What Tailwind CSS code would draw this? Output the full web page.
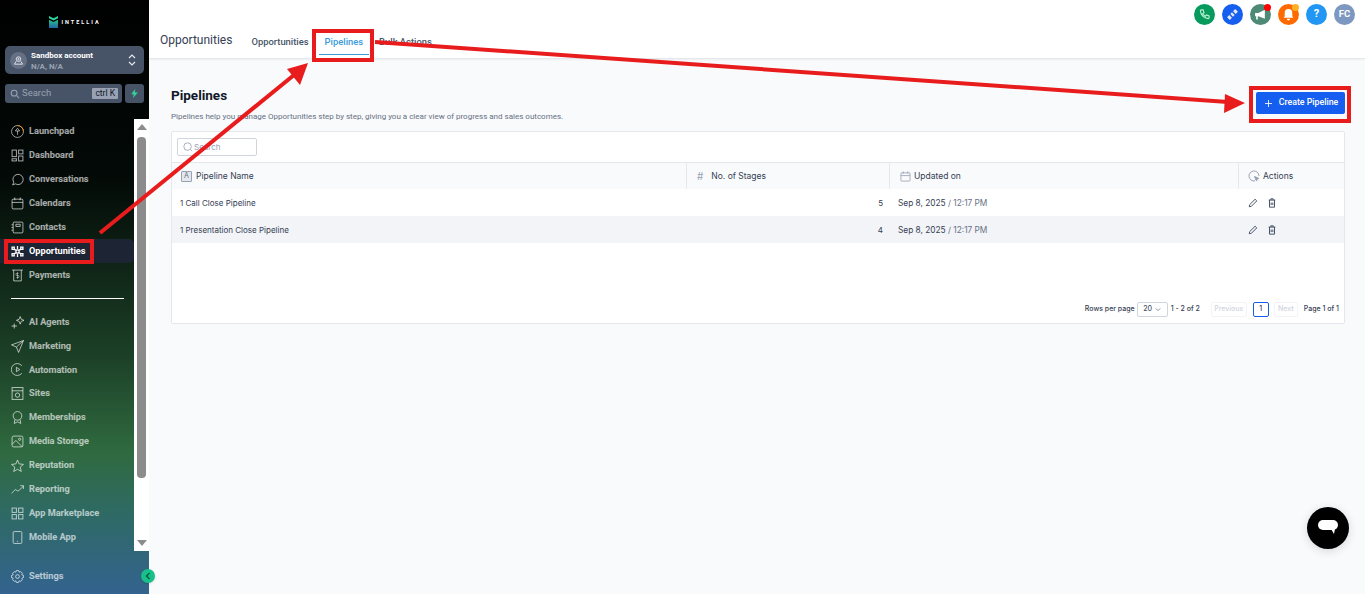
<!DOCTYPE html>
<html lang="en">
<head>
	<meta charset="UTF-8">
	<title>Pipelines</title>
	<script src="https://cdn.jsdelivr.net/npm/@tailwindcss/browser@4"></script>
</head>
<body class="relative h-[594px] w-[1365px] overflow-hidden bg-[#f9fafb] font-['Roboto',sans-serif]">
<div class="flex h-[594px]">
	<!-- Sidebar -->
	<aside class="flex h-[594px] w-[149px] shrink-0 flex-col bg-[linear-gradient(180deg,#000_0%,#030a07_30%,#1c4027_60%,#2f6a3f_76%,#2f6a63_86%,#33638f_100%)]">
		<div class="flex h-[46px] items-center justify-center gap-[3px] pb-[2px] pl-[1px]">
			<svg width="9" height="12" viewBox="0 0 12 16"><path d="M0 0l6 3 6-3v3l-6 3-6-3z" fill="#2dd4a0"/><path d="M0 5l6 3 6-3v11H0z" fill="url(#lg)"/><defs><linearGradient id="lg" x1="0" y1="0" x2="0" y2="1"><stop offset="0" stop-color="#22c58b"/><stop offset="1" stop-color="#2563a8"/></linearGradient></defs></svg>
			<span class="text-[5.5px] font-bold tracking-[2px] text-white">INTELLIA</span>
		</div>
		<div class="mx-[5px] flex h-[28px] items-center rounded-[5px] bg-[#475467] pl-[5px] pr-[8px]">
			<div class="flex h-[17px] w-[17px] items-center justify-center rounded-full bg-[#667085]">
				<svg class="h-[11px] w-[11px]" viewBox="0 0 24 24" fill="none" stroke="#e4e7ec" stroke-width="2"><circle cx="12" cy="9" r="5"/><circle cx="12" cy="9" r="1.5"/><path d="M7 14l-4 6h18l-4-6"/></svg>
			</div>
			<div class="ml-[4px] flex-1 pt-[1px] leading-[11px]">
				<div class="text-[8px] font-bold text-white">Sandbox account</div>
				<div class="text-[8px] font-bold text-[#98a2b3]">N/A, N/A</div>
			</div>
			<svg class="h-[14px] w-[8px]" viewBox="0 0 8 14" fill="none" stroke="#e4e7ec" stroke-width="1.2"><path d="M1 5l3-3 3 3M1 9l3 3 3-3"/></svg>
		</div>
		<div class="mx-[5px] mt-[10px] flex h-[19px] gap-[3px]">
			<div class="flex w-[117px] items-center rounded-[3px] bg-[#475467] pl-[5px] pr-[4px]">
				<svg class="h-[10px] w-[10px]" viewBox="0 0 24 24" fill="none" stroke="#98a2b3" stroke-width="2.5"><circle cx="10" cy="10" r="7"/><path d="M16 16l6 6"/></svg>
				<span class="ml-[2px] flex-1 text-[9.5px] text-[#98a2b3]">Search</span>
				<span class="rounded-[1px] bg-[#98a2b3] px-[3px] text-[8.5px] leading-[11px] text-[#101828]">ctrl K</span>
			</div>
			<div class="flex w-[19px] items-center justify-center rounded-[3px] bg-[#475467]">
				<svg class="h-[9px] w-[9px]" viewBox="0 0 24 24" fill="#34d399"><path d="M14 0L3 14h7l-2 10 13-15h-8z"/></svg>
			</div>
		</div>
		<div class="mt-[16px] flex h-[432px]">
			<nav class="w-[134px] text-[9.2px] font-bold text-white/65">
				<a class="flex h-[24px] items-center gap-[5px] pl-[11px]">
					<svg class="h-[13px] w-[13px]" viewBox="0 0 24 24" fill="none" stroke="currentColor" stroke-width="1.6"><circle cx="12" cy="12" r="11"/><path d="M12 1a11 11 0 0 1 11 11" stroke="#f79009"/><path d="M12 18v-7H8l4-5 4 5h-4"/></svg>Launchpad</a>
				<a class="flex h-[24px] items-center gap-[5px] pl-[11px]">
					<svg class="h-[13px] w-[13px]" viewBox="0 0 24 24" fill="none" stroke="currentColor" stroke-width="1.8"><rect x="2" y="2" width="8" height="12"/><rect x="14" y="2" width="8" height="7"/><rect x="14" y="13" width="8" height="9"/><rect x="2" y="18" width="8" height="4"/></svg>Dashboard</a>
				<a class="flex h-[24px] items-center gap-[5px] pl-[11px]">
					<svg class="h-[13px] w-[13px]" viewBox="0 0 24 24" fill="none" stroke="currentColor" stroke-width="1.8"><path d="M3 22l2-5a9.5 9.5 0 1 1 3 3z"/></svg>Conversations</a>
				<a class="flex h-[24px] items-center gap-[5px] pl-[11px]">
					<svg class="h-[13px] w-[13px]" viewBox="0 0 24 24" fill="none" stroke="currentColor" stroke-width="1.8"><rect x="2" y="4" width="20" height="18" rx="2"/><path d="M2 10h20M7 1v5M17 1v5"/></svg>Calendars</a>
				<a class="flex h-[24px] items-center gap-[5px] pl-[11px]">
					<svg class="h-[13px] w-[13px]" viewBox="0 0 24 24" fill="none" stroke="currentColor" stroke-width="1.8"><rect x="4" y="2" width="18" height="20" rx="2"/><path d="M1 7h3M1 12h3M1 17h3M9 10h8v-4H9z"/></svg>Contacts</a>
				<a class="flex h-[24px] items-center gap-[5px] rounded-r-[5px] bg-[#1d2433] pl-[11px] font-bold text-white">
					<svg class="h-[13px] w-[13px]" viewBox="0 0 24 24" fill="none" stroke="currentColor" stroke-width="2.4"><circle cx="12" cy="12" r="3"/><path d="M2 4h4v4H2zM18 4h4v4h-4zM2 16h4v4H2zM18 16h4v4h-4zM6 8l4 2M18 8l-4 2M6 16l4-2M18 16l-4-2M12 2v6M12 16v6"/></svg>Opportunities</a>
				<a class="flex h-[24px] items-center gap-[5px] pl-[11px]">
					<svg class="h-[13px] w-[13px]" viewBox="0 0 24 24" fill="none" stroke="currentColor" stroke-width="1.8"><path d="M2 2h20M5 2v20h14V2"/><path d="M14 8h-3a1.5 1.5 0 0 0 0 4h2a1.5 1.5 0 0 1 0 4h-3M12 6v12" stroke-width="1.3"/></svg>Payments</a>
				<div class="flex h-[23px] items-center pl-[11px] pr-[10px]"><div class="h-px w-full bg-white"></div></div>
				<a class="flex h-[24px] items-center gap-[5px] pl-[11px]">
					<svg class="h-[13px] w-[13px]" viewBox="0 0 24 24" fill="none" stroke="currentColor" stroke-width="1.8"><path d="M17 1l2 5 5 2-5 2-2 5-2-5-5-2 5-2zM6 14v9M1 18.500h10"/></svg>AI Agents</a>
				<a class="flex h-[24px] items-center gap-[5px] pl-[11px]">
					<svg class="h-[13px] w-[13px]" viewBox="0 0 24 24" fill="none" stroke="currentColor" stroke-width="1.8"><path d="M23 1L1 9l9 4 4 10zM10 13L23 1"/></svg>Marketing</a>
				<a class="flex h-[23px] items-center gap-[5px] pl-[11px]">
					<svg class="h-[13px] w-[13px]" viewBox="0 0 24 24" fill="none" stroke="currentColor" stroke-width="1.8"><path d="M20 5a11 11 0 1 0 0 14"/><path d="M10 8l6 4-6 4z"/></svg>Automation</a>
				<a class="flex h-[24px] items-center gap-[5px] pl-[11px]">
					<svg class="h-[13px] w-[13px]" viewBox="0 0 24 24" fill="none" stroke="currentColor" stroke-width="1.8"><rect x="2" y="1" width="20" height="22"/><path d="M2 7h20"/><circle cx="12" cy="15" r="4"/></svg>Sites</a>
				<a class="flex h-[24px] items-center gap-[5px] pl-[11px]">
					<svg class="h-[13px] w-[13px]" viewBox="0 0 24 24" fill="none" stroke="currentColor" stroke-width="1.8"><circle cx="12" cy="9" r="8"/><path d="M7 16l-1 7 6-3 6 3-1-7"/></svg>Memberships</a>
				<a class="flex h-[24px] items-center gap-[5px] pl-[11px]">
					<svg class="h-[13px] w-[13px]" viewBox="0 0 24 24" fill="none" stroke="currentColor" stroke-width="1.8"><rect x="2" y="2" width="20" height="20" rx="3"/><circle cx="16" cy="8" r="2"/><path d="M2 17l7-7 12 12"/></svg>Media Storage</a>
				<a class="flex h-[24px] items-center gap-[5px] pl-[11px]">
					<svg class="h-[13px] w-[13px]" viewBox="0 0 24 24" fill="none" stroke="currentColor" stroke-width="1.8"><path d="M12 2l3 7 8 1-6 5 2 8-7-4-7 4 2-8-6-5 8-1z"/></svg>Reputation</a>
				<a class="flex h-[24px] items-center gap-[5px] pl-[11px]">
					<svg class="h-[13px] w-[13px]" viewBox="0 0 24 24" fill="none" stroke="currentColor" stroke-width="1.8"><path d="M1 19l7-7 5 3 10-9M17 5h6v6"/></svg>Reporting</a>
				<a class="flex h-[24px] items-center gap-[5px] pl-[11px]">
					<svg class="h-[13px] w-[13px]" viewBox="0 0 24 24" fill="none" stroke="currentColor" stroke-width="1.8"><rect x="2" y="2" width="8" height="8"/><rect x="14" y="2" width="8" height="8"/><rect x="2" y="14" width="8" height="8"/><rect x="14" y="14" width="8" height="8"/></svg>App Marketplace</a>
				<a class="flex h-[24px] items-center gap-[5px] pl-[11px]">
					<svg class="h-[13px] w-[13px]" viewBox="0 0 24 24" fill="none" stroke="currentColor" stroke-width="1.8"><rect x="4" y="1" width="16" height="22" rx="2"/><path d="M11 19h2"/></svg>Mobile App</a>
			</nav>
			<!-- scrollbar -->
			<div class="flex w-[15px] flex-col items-center bg-white py-[5px]">
				<div class="h-0 w-0 border-x-[5px] border-b-[6px] border-x-transparent border-b-[#8c8c8c]"></div>
				<div class="mt-[7px] h-[341px] w-[9px] rounded-[4px] bg-[#8c8c8c]"></div>
				<div class="mt-auto h-0 w-0 border-x-[5px] border-t-[6px] border-x-transparent border-t-[#8c8c8c]"></div>
			</div>
		</div>
		<a class="mt-[13px] flex h-[24px] items-center gap-[5px] pl-[11px] text-[9.2px] font-bold text-white/65">
			<svg class="h-[13px] w-[13px]" viewBox="0 0 24 24" fill="none" stroke="currentColor" stroke-width="1.8"><circle cx="12" cy="12" r="3.5"/><path d="M10 1h4l1 3 3-1 3 3-1 3 3 1v4l-3 1 1 3-3 3-3-1-1 3h-4l-1-3-3 1-3-3 1-3-3-1v-4l3-1-1-3 3-3 3 1z"/></svg>Settings</a>
	</aside>

	<!-- Main -->
	<main class="flex min-w-0 flex-1 flex-col">
		<header class="relative h-[59px] border-b border-[#e4e7ec] bg-white shadow-[0_1px_2px_rgba(16,24,40,0.05)]">
			<div class="flex h-[28px] items-center justify-end gap-[7px] pr-[10px]">
				<div class="flex h-[21px] w-[21px] items-center justify-center rounded-full bg-[#069b5c]">
					<svg class="h-[11px] w-[11px]" viewBox="0 0 24 24" fill="none" stroke="#bdf0d8" stroke-width="2.4"><path d="M5 2h4l2 6-3 2a13 13 0 0 0 6 6l2-3 6 2v4a2 2 0 0 1-2 2A18 18 0 0 1 3 4a2 2 0 0 1 2-2z"/></svg>
				</div>
				<div class="flex h-[21px] w-[21px] items-center justify-center rounded-full bg-[#155eef]">
					<svg class="h-[13px] w-[13px]" viewBox="0 0 24 24" fill="#e4e7ec"><path d="M17 2l5 5-4 4-5-5zM11 8l5 5-3 3-5-5zM6 13l5 5-4 4-5-5z"/></svg>
				</div>
				<div class="relative flex h-[21px] w-[21px] items-center justify-center rounded-full bg-[#4e8a76]">
					<svg class="h-[13px] w-[13px]" viewBox="0 0 24 24" fill="#fff"><path d="M2 9h6l12-6v17L8 15H7v6H4v-6H2z"/></svg>
					<span class="absolute right-0 top-0 h-[7px] w-[7px] rounded-full bg-[#f00]"></span>
				</div>
				<div class="relative flex h-[21px] w-[21px] items-center justify-center rounded-full bg-[#ff6a00]">
					<svg class="h-[13px] w-[13px]" viewBox="0 0 24 24" fill="#fff"><path d="M12 2a7 7 0 0 0-7 7v6l-2 3h18l-2-3V9a7 7 0 0 0-7-7zM9 20a3 3 0 0 0 6 0z"/></svg>
					<span class="absolute right-0 top-0 h-[7px] w-[7px] rounded-full bg-[#fdb022]"></span>
				</div>
				<div class="flex h-[21px] w-[21px] items-center justify-center rounded-full bg-[#2196f3] text-[11px] font-bold text-white">?</div>
				<div class="flex h-[21px] w-[21px] items-center justify-center rounded-full bg-[#7c98c0] text-[9.5px] font-bold text-white">FC</div>
			</div>
			<div class="flex h-[30px] items-center pb-[2px] pl-[11px]">
				<h1 class="mb-[5px] text-[12px] text-[#344054]">Opportunities</h1>
				<div class="ml-[19px] flex text-[9.4px] font-medium text-[#475467]">
					<a>Opportunities</a>
					<a class="relative ml-[16px] text-[#3b9bd9]">Pipelines<span class="absolute -inset-x-[6px] -bottom-[6px] h-px bg-[#3b9bd9]"></span></a>
					<a class="ml-[16px]">Bulk Actions</a>
				</div>
			</div>
		</header>
		<section class="px-[22px] pr-[20px]">
			<div class="flex h-[72px] items-start justify-between">
				<div>
					<h2 class="mt-[28px] text-[13.5px] leading-[17px] font-bold text-[#101828]">Pipelines</h2>
					<p class="mt-[7px] text-[8px] leading-[11px] text-[#667085]">Pipelines help you manage Opportunities step by step, giving you a clear view of progress and sales outcomes.</p>
				</div>
				<button class="mt-[33px] mr-0 flex h-[22px] w-[89px] items-center justify-center gap-[7px] rounded-[2px] bg-[#155eef] pl-[2px] text-[8.8px] font-medium text-white">
					<svg class="h-[7px] w-[7px]" viewBox="0 0 10 10" stroke="#fff" stroke-width="1.2"><path d="M5 0v10M0 5h10"/></svg>Create Pipeline</button>
			</div>
			<!-- Table card -->
			<div class="h-[193px] rounded-[2px] border border-[#e4e7ec] bg-white font-['Inter',sans-serif]">
				<div class="flex h-[30px] items-center pl-[5px]">
					<div class="flex h-[18px] w-[80px] items-center rounded-[2px] border border-[#d0d5dd] pl-[5px] text-[8px] text-[#98a2b3]">
						<svg class="h-[10px] w-[10px]" viewBox="0 0 24 24" fill="none" stroke="#98a2b3" stroke-width="2"><circle cx="11" cy="11" r="9"/><path d="M18 18l4 4"/></svg>
						<span class="ml-[1px]">Search</span>
					</div>
				</div>
				<div class="grid h-[27px] grid-cols-[514px_203px_349px_1fr] border-t border-[#e4e7ec] bg-[#f9fafb] text-[8.5px] text-[#344054]">
					<div class="flex items-center gap-[4px] pl-[9px]">
						<span class="flex h-[11px] w-[11px] items-center justify-center rounded-[1px] border border-[#98a2b3] bg-[#e4e7ec] text-[7px] text-[#667085]">A</span>Pipeline Name</div>
					<div class="flex items-center gap-[8px] border-l border-[#e4e7ec] pl-[10px]"><span class="text-[10px] text-[#98a2b3]">#</span>No. of Stages</div>
					<div class="flex items-center gap-[3px] border-l border-[#e4e7ec] pl-[10px]">
						<svg class="h-[11px] w-[11px]" viewBox="0 0 24 24" fill="none" stroke="#98a2b3" stroke-width="1.8"><rect x="2" y="4" width="20" height="18" rx="2"/><path d="M2 10h20M7 1v5M17 1v5"/></svg>Updated on</div>
					<div class="flex items-center gap-[3px] border-l border-[#e4e7ec] pl-[9px]">
						<svg class="h-[12px] w-[12px]" viewBox="0 0 24 24" fill="none" stroke="#98a2b3" stroke-width="2"><path d="M22 12a10 10 0 1 0-8 9.8"/><path d="M13 13l9 4-4 1-1 4z" fill="#98a2b3"/></svg>Actions</div>
				</div>
				<div class="grid h-[27px] grid-cols-[514px_203px_349px_1fr] items-center pt-[1px] text-[8px] text-[#344054]">
					<div class="pl-[8px]">1 Call Close Pipeline</div>
					<div class="pr-[6px] text-right">5</div>
					<div class="pl-[9px] text-[8.3px]">Sep 8, 2025 <span class="text-[#667085]">/ 12:17 PM</span></div>
					<div class="flex gap-[9px] pl-[10px]">
						<svg class="h-[10px] w-[10px]" viewBox="0 0 24 24" fill="none" stroke="#475467" stroke-width="2.4"><path d="M3 21l1-5L17 3l4 4L8 20z"/></svg>
						<svg class="h-[10px] w-[10px]" viewBox="0 0 24 24" fill="none" stroke="#475467" stroke-width="2.4"><path d="M4 5h16M9 5V2h6v3M6 5v17h12V5M10 11v6M14 11v6"/></svg>
					</div>
				</div>
				<div class="grid h-[27px] grid-cols-[514px_203px_349px_1fr] items-center bg-[#f2f4f7] pt-[1px] text-[8px] text-[#344054]">
					<div class="pl-[8px]">1 Presentation Close Pipeline</div>
					<div class="pr-[6px] text-right">4</div>
					<div class="pl-[9px] text-[8.3px]">Sep 8, 2025 <span class="text-[#667085]">/ 12:17 PM</span></div>
					<div class="flex gap-[9px] pl-[10px]">
						<svg class="h-[10px] w-[10px]" viewBox="0 0 24 24" fill="none" stroke="#475467" stroke-width="2.4"><path d="M3 21l1-5L17 3l4 4L8 20z"/></svg>
						<svg class="h-[10px] w-[10px]" viewBox="0 0 24 24" fill="none" stroke="#475467" stroke-width="2.4"><path d="M4 5h16M9 5V2h6v3M6 5v17h12V5M10 11v6M14 11v6"/></svg>
					</div>
				</div>
				<div class="mt-[59px] flex items-center justify-end pr-[5px] text-[7px] font-medium text-[#344054]">
					<span>Rows per page</span>
					<div class="ml-[2px] flex h-[15px] w-[31px] items-center justify-center gap-[3px] rounded-[2px] border border-[#d0d5dd] bg-white text-[#475467]">20
						<svg class="h-[5px] w-[6px]" viewBox="0 0 8 5" fill="none" stroke="#667085"><path d="M1 1l3 3 3-3"/></svg>
					</div>
					<span class="ml-[3px]">1 - 2 of 2</span>
					<div class="ml-[11px] flex h-[15px] w-[36px] items-center justify-center rounded-[2px] border border-[#f2f4f7] text-[#d0d5dd]">Previous</div>
					<div class="ml-[6px] flex h-[15px] w-[16px] items-center justify-center rounded-[2px] border border-[#155eef]">1</div>
					<div class="ml-[5px] flex h-[15px] w-[24px] items-center justify-center rounded-[2px] border border-[#f2f4f7] text-[#d0d5dd]">Next</div>
					<span class="ml-[6px]">Page 1 of 1</span>
				</div>
			</div>
		</section>
	</main>
</div>

<!-- collapse toggle -->
<div class="absolute left-[141px] top-[569px] flex h-[14px] w-[14px] items-center justify-center rounded-full bg-[#17c08a] shadow-sm">
	<svg class="h-[8px] w-[8px]" viewBox="0 0 8 8" fill="none" stroke="#053" stroke-width="1.2"><path d="M5.5 1L2.5 4l3 3"/></svg>
</div>

<!-- chat bubble -->
<div class="absolute left-[1307px] top-[507px] flex h-[42px] w-[42px] items-center justify-center rounded-full bg-black shadow-[0_2px_10px_rgba(16,24,40,0.15)]">
	<svg class="h-[20px] w-[22px]" viewBox="0 0 22 20" fill="#fff"><rect x="1" y="2" width="20" height="10" rx="5"/><path d="M14 11h4l-1 5z"/></svg>
</div>

<!-- annotation overlay -->
<div class="absolute left-[4px] top-[239px] h-[25px] w-[90px] border-[4px] border-[#e81c1c]"></div>
<div class="absolute left-[312px] top-[29px] h-[33px] w-[62px] border-[4px] border-[#e81c1c]"></div>
<div class="absolute left-[1249px] top-[86px] h-[37px] w-[102px] border-[4px] border-[#e81c1c]"></div>
<svg class="pointer-events-none absolute left-0 top-0" width="1365" height="594" viewBox="0 0 1365 594">
	<path d="M100 233L294 75" stroke="#e81c1c" stroke-width="4" fill="none"/>
	<path d="M308 63L287 69l13 16z" fill="#e81c1c"/>
	<path d="M375 42L1228 102" stroke="#e81c1c" stroke-width="4" fill="none"/>
	<path d="M1245 103L1225 94l-1 19z" fill="#e81c1c"/>
</svg>
</body>
</html>
